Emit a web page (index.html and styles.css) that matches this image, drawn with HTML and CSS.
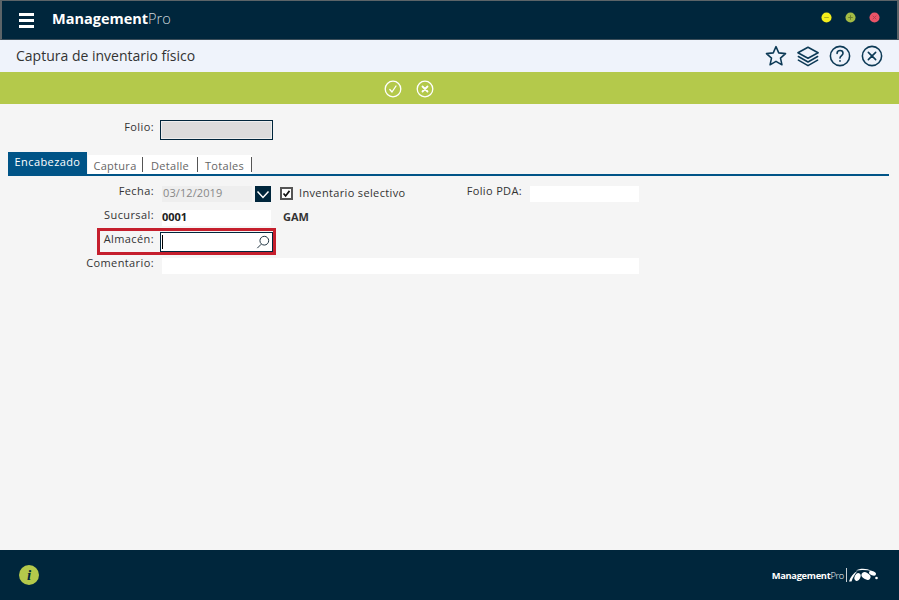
FILE: index.html
```html
<!DOCTYPE html>
<html lang="es">
<head>
<meta charset="utf-8">
<title>Captura de inventario físico</title>
<link rel="stylesheet" href="styles.css">
</head>
<body>
<div class="app">
  <header class="topbar">
    <div class="burger"><span></span><span></span><span></span></div>
    <div class="brand"><b>Management</b><span>Pro</span></div>
    <div class="winbtns">
      <svg class="winbtn" viewBox="0 0 12 12"><circle cx="6" cy="6" r="5.5" fill="#f4ee1c"/><path d="M3.5 6h5" stroke="#a9a520" stroke-width="1"/></svg>
      <svg class="winbtn" viewBox="0 0 12 12"><circle cx="6" cy="6" r="5.5" fill="#a3bb45"/><path d="M3.5 6h5M6 3.5v5" stroke="#6b7d2a" stroke-width="1"/></svg>
      <svg class="winbtn" viewBox="0 0 12 12"><circle cx="6" cy="6" r="5.5" fill="#ea5468"/><path d="M4 4l4 4M8 4l-4 4" stroke="#b53c4c" stroke-width="1"/></svg>
    </div>
  </header>
  <div class="titlebar">
    <h1>Captura de inventario físico</h1>
    <div class="tools">
      <svg class="tool" viewBox="0 0 24 24"><path d="M12 1.800l3 6.800 7.400.8-5.500 4.900 1.600 7.300-6.500-3.800-6.500 3.800 1.600-7.300-5.500-4.900 7.400-.8z"/></svg>
      <svg class="tool" viewBox="0 0 24 24"><path d="M12 2.500L23 8.500l-11 6-11-6z"/><path d="M1.500 12.500l10.500 6 10.500-6"/><path d="M1.500 16.500l10.500 6 10.500-6"/></svg>
      <svg class="tool" viewBox="0 0 24 24"><circle cx="12" cy="12" r="10.500"/><path d="M8.800 9.300c0-2 1.500-3.200 3.300-3.200s3.200 1.200 3.200 2.900c0 2.500-3.300 2.600-3.300 5.300"/><circle class="dot" cx="12" cy="17.400" r="1"/></svg>
      <svg class="tool" viewBox="0 0 24 24"><circle cx="12" cy="12" r="10.500"/><path d="M8 8l8 8M16 8l-8 8"/></svg>
    </div>
  </div>
  <div class="actionbar">
    <svg class="action" viewBox="0 0 18 18"><circle cx="9" cy="9" r="7.800"/><path d="M5.800 9.500l2.200 2.500 4-6"/></svg>
    <svg class="action" viewBox="0 0 18 18"><circle cx="9" cy="9" r="7.800"/><path d="M6.500 6.500l5 5M11.500 6.500l-5 5" stroke-width="1.800"/></svg>
  </div>
  <main class="content">
    <div class="folio-row">
      <label class="label">Folio:</label>
      <div class="folio-field"></div>
    </div>
    <nav class="tabs">
      <span class="tab active">Encabezado</span>
      <div class="tab-rest">
        <span class="tab">Captura</span>
        <span class="tab">Detalle</span>
        <span class="tab">Totales</span>
      </div>
    </nav>
    <section class="form">
      <div class="row">
        <label class="label">Fecha:</label>
        <div class="field date">03/12/2019</div>
        <div class="drop"><svg viewBox="0 0 16 16"><path d="M2.500 5.500L8 11.500l5.500-6"/></svg></div>
        <div class="check"><svg viewBox="0 0 12 12"><path d="M2 6l2.800 3.200L10 2.500"/></svg></div>
        <span class="check-label">Inventario selectivo</span>
        <label class="label pda-label">Folio PDA:</label>
        <div class="field pda"></div>
      </div>
      <div class="row">
        <label class="label">Sucursal:</label>
        <div class="field branch">0001</div>
        <strong class="gam">GAM</strong>
      </div>
      <div class="row store">
        <div class="highlight"></div>
        <label class="label">Almacén:</label>
        <div class="store-input">
          <span class="caret"></span>
          <svg viewBox="0 0 16 16"><circle cx="9.500" cy="6.500" r="5"/><path d="M6 10.500L1.500 15"/></svg>
        </div>
      </div>
      <div class="row">
        <label class="label">Comentario:</label>
        <div class="field comment"></div>
      </div>
    </section>
  </main>
  <footer class="footer">
    <div class="info">i</div>
    <div class="logo">
      <span class="logo-text"><b>Management</b>Pro</span>
      <span class="logo-sep"></span>
      <svg class="logo-mark" viewBox="0 0 29 14">
        <path d="M0 13.500C1.500 8.500 4.500 5 8.500 3 6 6 3.800 9.500 2.500 13.500z" fill="#fff"/>
        <path d="M7 2.500C11 .2 17 0 23 3 18 1.800 12 1.500 7 2.500z" fill="#fff"/>
        <ellipse cx="8.500" cy="9" rx="2.800" ry="4" transform="rotate(25 8.500 9)" fill="#fff"/>
        <ellipse cx="17" cy="8" rx="4.800" ry="3.300" transform="rotate(30 17 8)" fill="#fff"/>
        <ellipse cx="23.500" cy="5.200" rx="3.600" ry="2.100" transform="rotate(20 23.500 5.200)" fill="#fff"/>
        <circle cx="27.500" cy="10" r="1.300" fill="#fff"/>
      </svg>
    </div>
  </footer>
</div>
</body>
</html>
```

FILE: styles.css
```css
* { box-sizing: border-box; }
html, body { margin: 0; padding: 0; }
body { font-family: "Open Sans", "Liberation Sans", sans-serif; color: #333; background: #f5f5f5; }
.app { width: 899px; height: 600px; display: flex; flex-direction: column; overflow: hidden; }

.topbar { height: 40px; flex: none; background: #00263c; border-top: 1px solid #5c6468; border-left: 2px solid #5c6468; border-right: 2px solid #5c6468; border-bottom: 1px solid #3c4e5a; display: flex; align-items: center; padding-left: 17px; }
.burger { width: 15px; display: flex; flex-direction: column; gap: 3px; }
.burger span { height: 3px; background: #fff; }
.brand { margin-left: 18px; font-size: 14.5px; color: #fff; line-height: 20px; margin-top: -2px; }
.brand b { font-weight: 700; }
.brand span { font-weight: 300; color: #cfd8dd; }
.winbtns { margin-left: auto; margin-right: 17px; display: flex; gap: 13px; margin-top: -6px; }
.winbtn { width: 11px; height: 11px; display: block; }

.titlebar { height: 32px; flex: none; background: #eff3fb; display: flex; align-items: center; padding: 0 16px 0 16px; }
h1 { margin: 0; font-size: 14px; font-weight: 400; color: #333; line-height: 32px; flex: 1; }
.tools { display: flex; gap: 10px; align-items: center; }
.tool { width: 22px; height: 22px; fill: none; stroke: #0d3a56; stroke-width: 1.700; stroke-linejoin: round; stroke-linecap: round; display: block; }
.tool .dot { fill: #0d3a56; stroke: none; }

.actionbar { height: 32px; flex: none; background: #b4c94b; display: flex; justify-content: center; align-items: center; gap: 14px; padding: 2px 82px 0 0; }
.action { width: 18px; height: 18px; fill: none; stroke: #fff; stroke-width: 1.300; stroke-linecap: round; stroke-linejoin: round; display: block; }

.content { flex: 1; padding: 16px 10px 0 8px; min-height: 0; }
.label { font-size: 11px; letter-spacing: .4px; color: #333; line-height: 16px; text-align: right; }
.folio-row { display: flex; align-items: center; height: 20px; }
.folio-row .label { width: 146px; margin-right: 6px; margin-top: -6px; }
.folio-field { width: 113px; height: 20px; background: #dcdcdc; border: 1px solid #00263c; box-shadow: inset 0 0 0 1px #eee; }

.tabs { display: flex; align-items: flex-end; margin-top: 12px; height: 24px; border-bottom: 2px solid #005487; }
.tab-rest { display: flex; background: #fff; height: 19px; margin-left: 1px; width: 164px; }
.tab { font-size: 11px; letter-spacing: .3px; color: #666; border-right: 1px solid #555; height: 15px; margin-top: 2px; display: flex; align-items: center; justify-content: center; padding-top: 2px; }
.tab:nth-child(1) { width: 55px; }
.tab:nth-child(2) { width: 55px; }
.tab:nth-child(3) { width: 54px; }
.tab.active { background: #005487; color: #fff; width: 79px; height: 22px; margin-top: 0; border: 0; padding: 0 0 3px; align-self: flex-end; letter-spacing: .4px; }

.form { padding-top: 10px; }
.row { display: flex; align-items: center; height: 16px; margin-bottom: 8px; position: relative; }
.row > .label:first-of-type { width: 146px; margin-right: 8px; flex: none; position: relative; top: -3px; }
.field { height: 16px; background: #fff; font-size: 11px; line-height: 16px; }
.date { width: 90px; background: #eee; color: #888; letter-spacing: .1px; padding: 0 0 0 1px; line-height: 13px; }
.drop { width: 16px; height: 16px; margin-left: 3px; background: #00263c; }
.drop svg { width: 16px; height: 16px; display: block; fill: none; stroke: #fff; stroke-width: 1.500; }
.check { width: 13px; height: 13px; margin-left: 9px; margin-top: -1px; border: 2px solid #555; background: #fff; }
.check svg { width: 9px; height: 9px; display: block; fill: none; stroke: #111; stroke-width: 2.200; }
.check-label { font-size: 11px; letter-spacing: .35px; margin-left: 6px; color: #333; width: 167px; position: relative; top: -2px; }
.row > .pda-label { width: 56px; margin-right: 8px; position: relative; top: -3px; letter-spacing: .35px; }
.pda { width: 109px; }
.branch { width: 109px; font-weight: 700; color: #222; line-height: 13px; }
.gam { font-size: 11px; margin-left: 12px; color: #333; position: relative; top: -2px; }
.row.store { height: 20px; margin-top: -2px; margin-bottom: 6px; }
.row.store > .label { margin-right: 6px; top: -3px; }
.highlight { position: absolute; left: 89px; top: -4px; width: 179px; height: 27px; border: 3px solid #c51f2d; }
.store-input { position: relative; width: 113px; height: 20px; background: #fff; border: 1px solid #00263c; display: flex; align-items: center; justify-content: space-between; padding: 0 2px 0 1px; }
.caret { width: 1px; height: 14px; background: #000; }
.store-input svg { width: 14px; height: 14px; fill: none; stroke: #1a2f3c; stroke-width: 1.100; }
.comment { width: 477px; }

.footer { height: 50px; flex: none; background: #00263c; display: flex; align-items: center; justify-content: space-between; padding: 0 21px 0 19px; }
.info { width: 20px; height: 20px; border-radius: 50%; background: #b4c94b; color: #00263c; font: italic 700 15px/20px "Liberation Serif", serif; text-align: center; }
.logo { display: flex; align-items: center; color: #fff; }
.logo-text { font-size: 9.3px; font-weight: 300; letter-spacing: -.3px; }
.logo-text b { font-weight: 700; }
.logo-sep { width: 1px; height: 14px; background: #c8d0d5; margin: 0 2px 0 2px; }
.logo-mark { width: 29px; height: 14px; display: block; }
```
